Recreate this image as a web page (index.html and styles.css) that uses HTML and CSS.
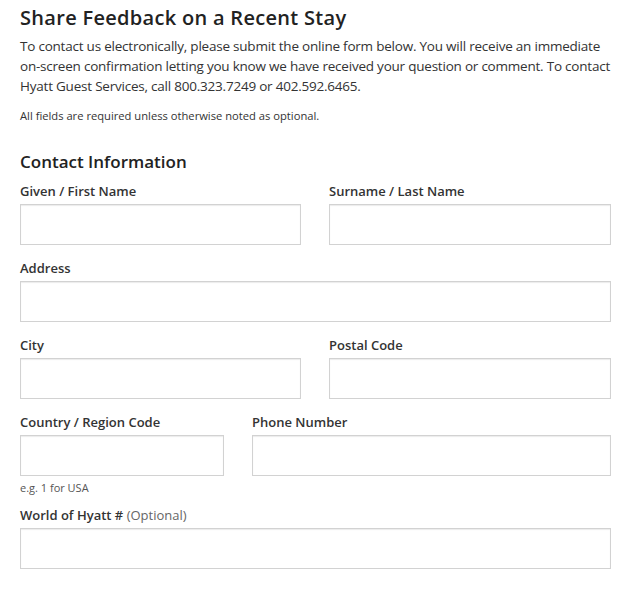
FILE: index.html
```html
<!DOCTYPE html>
<html lang="en">
<head>
<meta charset="utf-8">
<title>Share Feedback on a Recent Stay</title>
<link rel="stylesheet" href="styles.css">
</head>
<body>
<main class="page">
  <h1 class="title">Share Feedback on a Recent Stay</h1>
  <p class="intro">To contact us electronically, please submit the online form below. You will receive an immediate on-screen confirmation letting you know we have received your question or comment. To contact Hyatt Guest Services, call 800.323.7249 or 402.592.6465.</p>
  <p class="note">All fields are required unless otherwise noted as optional.</p>

  <h2 class="section-title">Contact Information</h2>
  <form class="form">
    <div class="row row-half">
      <div class="field">
        <label class="label" for="first">Given / First Name</label>
        <input class="input" id="first" type="text">
      </div>
      <div class="field">
        <label class="label" for="last">Surname / Last Name</label>
        <input class="input" id="last" type="text">
      </div>
    </div>
    <div class="row">
      <div class="field">
        <label class="label" for="address">Address</label>
        <input class="input" id="address" type="text">
      </div>
    </div>
    <div class="row row-half">
      <div class="field">
        <label class="label" for="city">City</label>
        <input class="input" id="city" type="text">
      </div>
      <div class="field">
        <label class="label" for="postal">Postal Code</label>
        <input class="input" id="postal" type="text">
      </div>
    </div>
    <div class="row row-phone">
      <div class="field">
        <label class="label" for="country">Country / Region Code</label>
        <input class="input" id="country" type="text">
        <span class="hint">e.g. 1 for USA</span>
      </div>
      <div class="field">
        <label class="label" for="phone">Phone Number</label>
        <input class="input" id="phone" type="text">
      </div>
    </div>
    <div class="row row-last">
      <div class="field">
        <label class="label" for="woh">World of Hyatt # <span class="optional">(Optional)</span></label>
        <input class="input" id="woh" type="text">
      </div>
    </div>
  </form>
</main>
</body>
</html>
```
FILE: styles.css
```css
* { box-sizing: border-box; }

html, body {
  margin: 0;
  padding: 0;
  background: #fff;
}

body {
  font-family: "Open Sans", "Liberation Sans", Arial, sans-serif;
  color: #333;
}

.page {
  width: 611px;
  padding: 4px 0 0 20px;
}

.title {
  margin: 0 0 4px;
  font-size: 20px;
  line-height: 28px;
  font-weight: 600;
  letter-spacing: 0.3px;
  color: #222;
}

.intro {
  margin: 0;
  font-size: 13.5px;
  line-height: 20px;
  color: #333;
  letter-spacing: -0.22px;
}

.note {
  margin: 12px 0 0;
  font-size: 11.2px;
  line-height: 16px;
  color: #333;
}

.section-title {
  margin: 26px 0 0;
  font-size: 17px;
  line-height: 24px;
  font-weight: 600;
  color: #222;
}

.form {
  margin-top: 8px;
}

.row {
  display: grid;
  grid-template-columns: 1fr;
  column-gap: 28px;
  margin-bottom: 14px;
}

.row-half {
  grid-template-columns: 281px 1fr;
}

.row-phone {
  grid-template-columns: 204px 1fr;
  margin-bottom: 11px;
}

.field {
  display: flex;
  flex-direction: column;
}

.label {
  display: block;
  font-size: 13px;
  line-height: 18px;
  font-weight: 600;
  color: #333;
  margin-bottom: 4px;
}

.optional {
  font-weight: 400;
  color: #666;
}

.input {
  display: block;
  width: 100%;
  height: 41px;
  margin: 0;
  border: 1px solid #d2d2d2;
  border-radius: 0;
  background: #fff;
  box-shadow: inset 0 1px 1px rgba(0, 0, 0, 0.08);
  font: inherit;
}

.hint {
  margin-top: 4px;
  font-size: 11px;
  line-height: 15px;
  color: #555;
}
```
